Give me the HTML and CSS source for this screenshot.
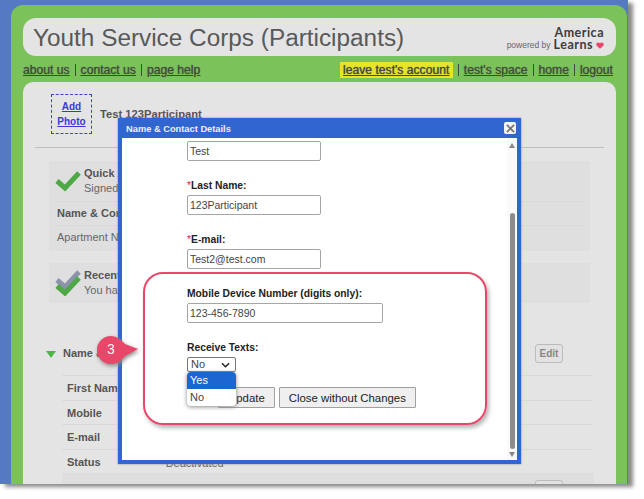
FILE: index.html
```html
<!DOCTYPE html>
<html lang="en">
<head>
<meta charset="utf-8">
<title>Youth Service Corps (Participants)</title>
<link rel="stylesheet" href="styles.css">
</head>
<body>
<div class="frame">
  <div class="green">
    <header class="head">
      <h1 class="title">Youth Service Corps (Participants)</h1>
      <div class="logo">
        <span class="powered">powered by</span>
        <span class="brand">America<br>Learns<svg class="heart" viewBox="0 0 10 9" width="8" height="7"><path d="M5 8.600 1 5C-.6 3.300.4.500 2.700.500 3.700.500 4.500 1 5 1.700 5.500 1 6.300.500 7.300.500 9.600.500 10.600 3.300 9 5Z" fill="#e8476a"/></svg></span>
      </div>
    </header>
    <nav class="nav">
      <div class="links">
        <a href="#">about us</a><i></i><a href="#">contact us</a><i></i><a href="#">page help</a>
      </div>
      <div class="links">
        <a href="#" class="leave">leave test's account</a><i></i><a href="#">test's space</a><i></i><a href="#">home</a><i></i><a href="#">logout</a>
      </div>
    </nav>
    <main class="panel">
      <div class="profile">
        <div class="photo"><a href="#">Add</a><a href="#">Photo</a></div>
        <b class="person">Test 123Participant</b>
      </div>
      <div class="box quick">
        <div class="boxhead">
          <svg class="check" viewBox="0 0 28 24" width="28" height="24"><path d="M3 12l8 7L25 4" fill="none" stroke="#4da845" stroke-width="5"/></svg>
          <div><b>Quick Access</b><br><span>Signed up</span></div>
        </div>
        <div class="boxrow"><b>Name &amp; Contact</b></div>
        <div class="boxrow last"><span>Apartment Number</span></div>
      </div>
      <div class="box recent">
        <div class="boxhead">
          <svg class="check" viewBox="0 0 28 26" width="28" height="26"><path d="M3 10l8 7L25 2" fill="none" stroke="#8d93ad" stroke-width="5"/><path d="M3 16l8 7L25 8" fill="none" stroke="#4da845" stroke-width="5"/></svg>
          <div><b>Recent</b><br><span>You have</span></div>
        </div>
      </div>
      <div class="section">
        <div class="sechead"><span class="tri"></span><b>Name &amp; Contact</b><button class="edit">Edit</button></div>
        <div class="datarow"><b>First Name</b></div>
        <div class="datarow"><b>Mobile</b></div>
        <div class="datarow"><b>E-mail</b></div>
        <div class="datarow status"><b>Status</b><span>Deactivated</span></div>
        <div class="graybar"><button class="edit" aria-label="Edit"></button></div>
      </div>
    </main>
  </div>
</div>

<section class="modal">
  <div class="modalbar"><b>Name &amp; Contact Details</b><span class="close"><svg viewBox="0 0 10 10" width="9" height="9"><path d="M1 1l8 8M9 1l-8 8" stroke="#777" stroke-width="2"/></svg></span></div>
  <div class="modalbody">
    <form class="form">
      <input class="field" value="Test">
      <label class="lab"><em>*</em>Last Name:</label>
      <input class="field" value="123Participant">
      <label class="lab"><em>*</em>E-mail:</label>
      <input class="field" value="Test2@test.com">
      <label class="lab">Mobile Device Number (digits only):</label>
      <input class="field wide" value="123-456-7890">
      <label class="lab">Receive Texts:</label>
      <div class="select">No<svg viewBox="0 0 10 6" width="9" height="6"><path d="M1 1l4 4 4-4" fill="none" stroke="#222" stroke-width="1.600"/></svg></div>
      <div class="buttons"><button type="button" class="btn">Update</button><button type="button" class="btn">Close without Changes</button></div>
    </form>
    <div class="scroll"><span class="up"></span><span class="track"><span class="thumb"></span></span><span class="down"></span></div>
  </div>
</section>

<div class="ring"></div>
<ul class="options"><li class="on">Yes</li><li>No</li></ul>
<div class="callout"><svg viewBox="0 0 41 28" width="41" height="28"><path d="M14 0C20 0 24 4 28 8L41 13 28 20C24 25 20 28 14 28A14 14 0 0 1 14 0Z" fill="#e8476a"/></svg><span>3</span></div>
</body>
</html>
```
FILE: styles.css
```css
* { box-sizing: border-box; }
html, body { margin: 0; height: 100%; overflow: hidden; background: #fff; }
body { font-family: "Liberation Sans", Arial, sans-serif; color: #555; position: relative; }

.frame { width: 628px; height: 484px; padding: 5px 1px 0 11px; background: #5579c2; box-shadow: 5px 3px 4px #8a8a8a; overflow: hidden; }
.green { height: 100%; padding: 13px 11px 0 12px; background: #7ac259; border-radius: 12px 12px 0 0; display: flex; flex-direction: column; }

.head { height: 38px; flex: none; padding: 1px 12px 0 10px; background: #e4e4e4; border-radius: 13px; display: flex; justify-content: space-between; align-items: center; }
.title { margin: 0; font-size: 24.350px; font-weight: 400; color: #595959; }
.logo { display: flex; align-items: flex-end; gap: 3px; margin-top: 2px; }
.powered { font: 8.500px "Liberation Sans", sans-serif; color: #666; margin-bottom: 1px; }
.brand { font: 700 12.500px/12px Lato, sans-serif; color: #3c3c3c; text-align: right; letter-spacing: .5px; }
.heart { margin-left: 3px; }

.nav { height: 26px; flex: none; padding: 2px 3px 0 0; display: flex; justify-content: space-between; align-items: center; }
.links { display: flex; align-items: center; }
.links a { font-size: 12.150px; color: #3f4a38; text-shadow: 0 0 1px #555; }
.links i { width: 1px; height: 12px; background: #3f4a38; margin: 0 5px; }
.links .leave { background: #e8e32c; padding: 1px 3.500px; }

.panel { flex: 1; min-height: 0; overflow: hidden; background: #e4e4e4; border-radius: 10px 10px 0 0; padding: 12px 12px 0; }
.profile { margin: 0 0 13px; padding: 0 0 13px 16px; border-bottom: 1px solid #bdbdbd; display: flex; align-items: center; gap: 8px; }
.photo { width: 41px; height: 40px; border: 1px dashed #3f3fd0; display: flex; flex-direction: column; align-items: center; justify-content: center; gap: 4px; }
.photo a { font-size: 10px; font-weight: 700; color: #3a3ad8; line-height: 11px; }
.person { font-size: 11.200px; }

.box { width: 541px; margin-left: 14px; background: #dfdfdf; font-size: 11px; }
.quick { height: 90px; margin-bottom: 12px; }
.recent { height: 40px; }
.boxhead { height: 40px; padding: 5px; display: flex; align-items: center; gap: 2px; line-height: 15px; }
.boxhead .check { flex: none; }
.boxhead span { color: #666; }
.boxrow { height: 24px; margin: 0 8px; padding: 5px 0 0; border-top: 1px solid #d8d8d8; }
.boxrow.last span { color: #666; }

.section { margin: 35px 0 0 11px; font-size: 11px; }
.sechead { height: 37px; padding-top: 8px; display: flex; align-items: flex-start; gap: 7px; }
.sechead b { margin-top: 1px; }
.tri { width: 0; height: 0; margin-top: 5px; border: 5px solid transparent; border-top: 7px solid #4cb648; border-bottom: 0; }
.sechead .edit { margin: -2px 41px 0 auto; }
.edit { width: 28px; height: 19px; padding: 0; font: 700 10px "Liberation Sans", sans-serif; color: #888; background: #e2e2e2; border: 1px solid #bbb; border-radius: 3px; }
.datarow { height: 24.500px; margin: 0 12px 0 16px; padding: 6px 0 0 5px; border-top: 1px solid #d9d9d9; display: flex; }
.datarow.status span { margin-left: 65px; margin-top: 1px; color: #666; }
.graybar { height: 20px; margin: 0 10px 0 16px; background: #dedede; padding: 7px 31px 0 0; text-align: right; }

.modal { position: absolute; left: 118px; top: 118px; width: 403px; height: 346px; background: #3165cf; padding: 0 4px 4px; display: flex; flex-direction: column; box-shadow: 0 0 2px #888; }
.modalbar { height: 20px; flex: none; display: flex; align-items: center; justify-content: space-between; color: #eef; font: 700 9.300px "Liberation Sans", sans-serif; padding: 0 0 0 4px; }
.modalbar b { margin-top: 2px; }
.close { width: 12px; height: 12px; background: #f4f4f4; border-radius: 2px; margin-right: 1px; display: flex; align-items: center; justify-content: center; }
.modalbody { flex: 1; min-height: 0; background: #fff; display: flex; justify-content: space-between; overflow: hidden; }
.form { padding: 3px 0 0 65px; color: #222; display: flex; flex-direction: column; align-items: flex-start; }
.field { width: 134px; height: 20px; flex: none; padding: 0 2px; border: 1px solid #a5a5a5; border-radius: 2px; font: 10.500px "Liberation Sans", sans-serif; color: #444; background: #fff; }
.field.wide { width: 196px; }
.lab { margin: 19px 0 3px; height: 12px; font: 700 10.300px/12px "Liberation Sans", sans-serif; }
.lab em { font-style: normal; font-weight: 400; color: #d8283c; }
.select { width: 49px; height: 15px; padding: 0 5px 0 3px; border: 1px solid #777; border-radius: 2px; font-size: 11px; line-height: 13px; color: #444; display: flex; align-items: center; justify-content: space-between; }
.buttons { display: flex; gap: 4px; margin: 15px 0 0 31px; }
.btn { height: 21px; padding: 0 9px; font: 11.400px "Liberation Sans", sans-serif; color: #222; background: #efefef; border: 1px solid #a0a0a0; border-radius: 1px; }
.scroll { width: 10px; flex: none; display: flex; flex-direction: column; align-items: center; padding: 5px 0 3px; background: #fafafa; }
.up, .down { flex: none; width: 0; height: 0; border: 3.500px solid transparent; }
.up { border-top: 0; border-bottom: 5px solid #888; }
.down { border-bottom: 0; border-top: 5px solid #888; }
.track { flex: 1; width: 5px; padding: 65px 0 3px; display: flex; }
.thumb { flex: 1; background: #8c8c8c; border-radius: 3px; }

.ring { position: absolute; left: 143px; top: 272px; width: 344px; height: 153px; border: 2px solid #e8476a; border-radius: 20px; box-shadow: 2px 3px 4px #b5b5b5; }
.options { position: absolute; left: 187px; top: 372px; width: 49px; height: 34px; margin: 0; padding: 0; list-style: none; background: #fff; border-radius: 4px; box-shadow: 0 1px 4px #888; font-size: 11px; color: #444; overflow: hidden; }
.options li { height: 17px; padding: 1px 3px; line-height: 15px; }
.options .on { background: #1b66d1; color: #fff; }
.callout { position: absolute; left: 97px; top: 336px; width: 41px; height: 28px; filter: drop-shadow(1px 2px 2px #888); }
.callout svg { display: block; }
.callout span { position: absolute; left: 0; top: 0; width: 28px; line-height: 27px; text-align: center; color: #fff; font-size: 14px; }
```
